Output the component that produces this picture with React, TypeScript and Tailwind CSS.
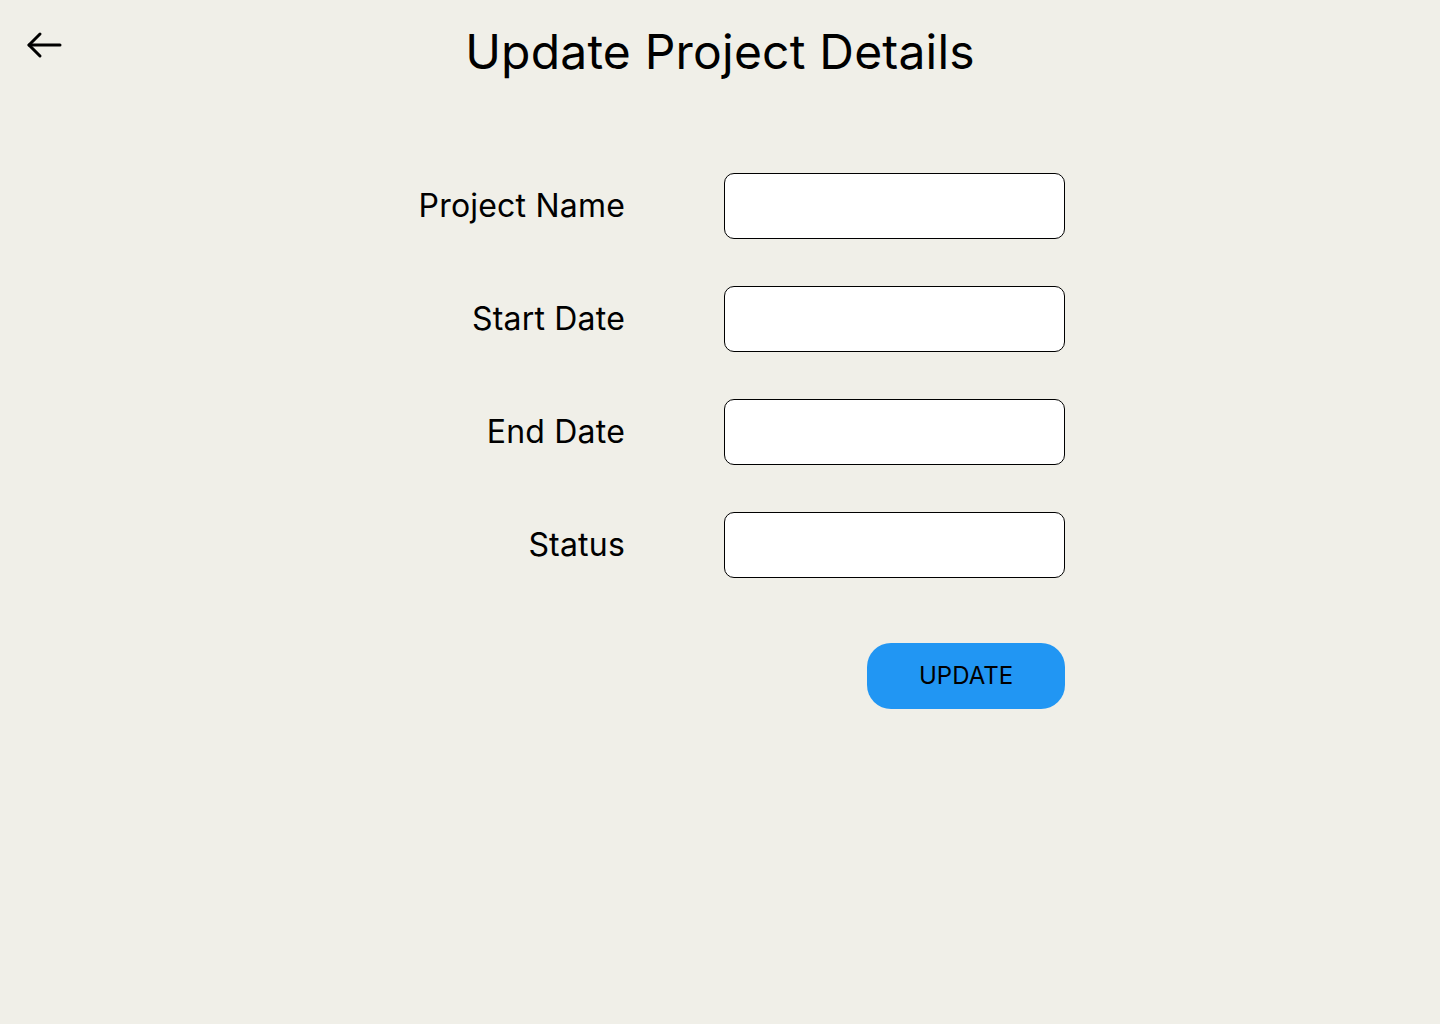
import React, { useState } from 'react';

const fields = [
  { key: 'name', label: 'Project Name' },
  { key: 'start', label: 'Start Date' },
  { key: 'end', label: 'End Date' },
  { key: 'status', label: 'Status' },
];

const BackArrow = () => (
  <svg width="40" height="30" viewBox="0 0 40 30" fill="none" stroke="black" strokeWidth="3" strokeLinecap="round" strokeLinejoin="round">
    <path d="M36 15H5" />
    <path d="M16 4L5 15L16 26" />
  </svg>
);

const App = () => {
  const [values, setValues] = useState<Record<string, string>>({});

  return (
    <div className="min-h-screen bg-[#f0efe8] text-black" style={{ fontFamily: 'Inter, "Noto Sans", sans-serif' }}>
      <header className="relative pt-[28px]">
        <button className="absolute left-[24px] top-[30px]" aria-label="Back">
          <BackArrow />
        </button>
        <h1 className="text-center text-[48px] leading-[48px] font-normal tracking-[0.2px]">Update Project Details</h1>
      </header>

      <form className="ml-[324px] mt-[97px] flex w-[741px] flex-col gap-[47px]" onSubmit={(e) => e.preventDefault()}>
        {fields.map((f) => (
          <div key={f.key} className="flex items-center gap-[99px]">
            <label className="w-[301px] text-right text-[32px] leading-none tracking-[0.2px]">{f.label}</label>
            <input
              value={values[f.key] || ''}
              onChange={(e) => setValues({ ...values, [f.key]: e.target.value })}
              className="h-[66px] w-[341px] rounded-[10px] border border-black bg-white px-4 text-[20px] outline-none"
            />
          </div>
        ))}
        <div className="mt-[18px] flex justify-end">
          <button type="submit" className="h-[66px] w-[198px] rounded-[24px] bg-[#2196f3] text-[24px] text-black">
            UPDATE
          </button>
        </div>
      </form>
    </div>
  );
};

export default App;
